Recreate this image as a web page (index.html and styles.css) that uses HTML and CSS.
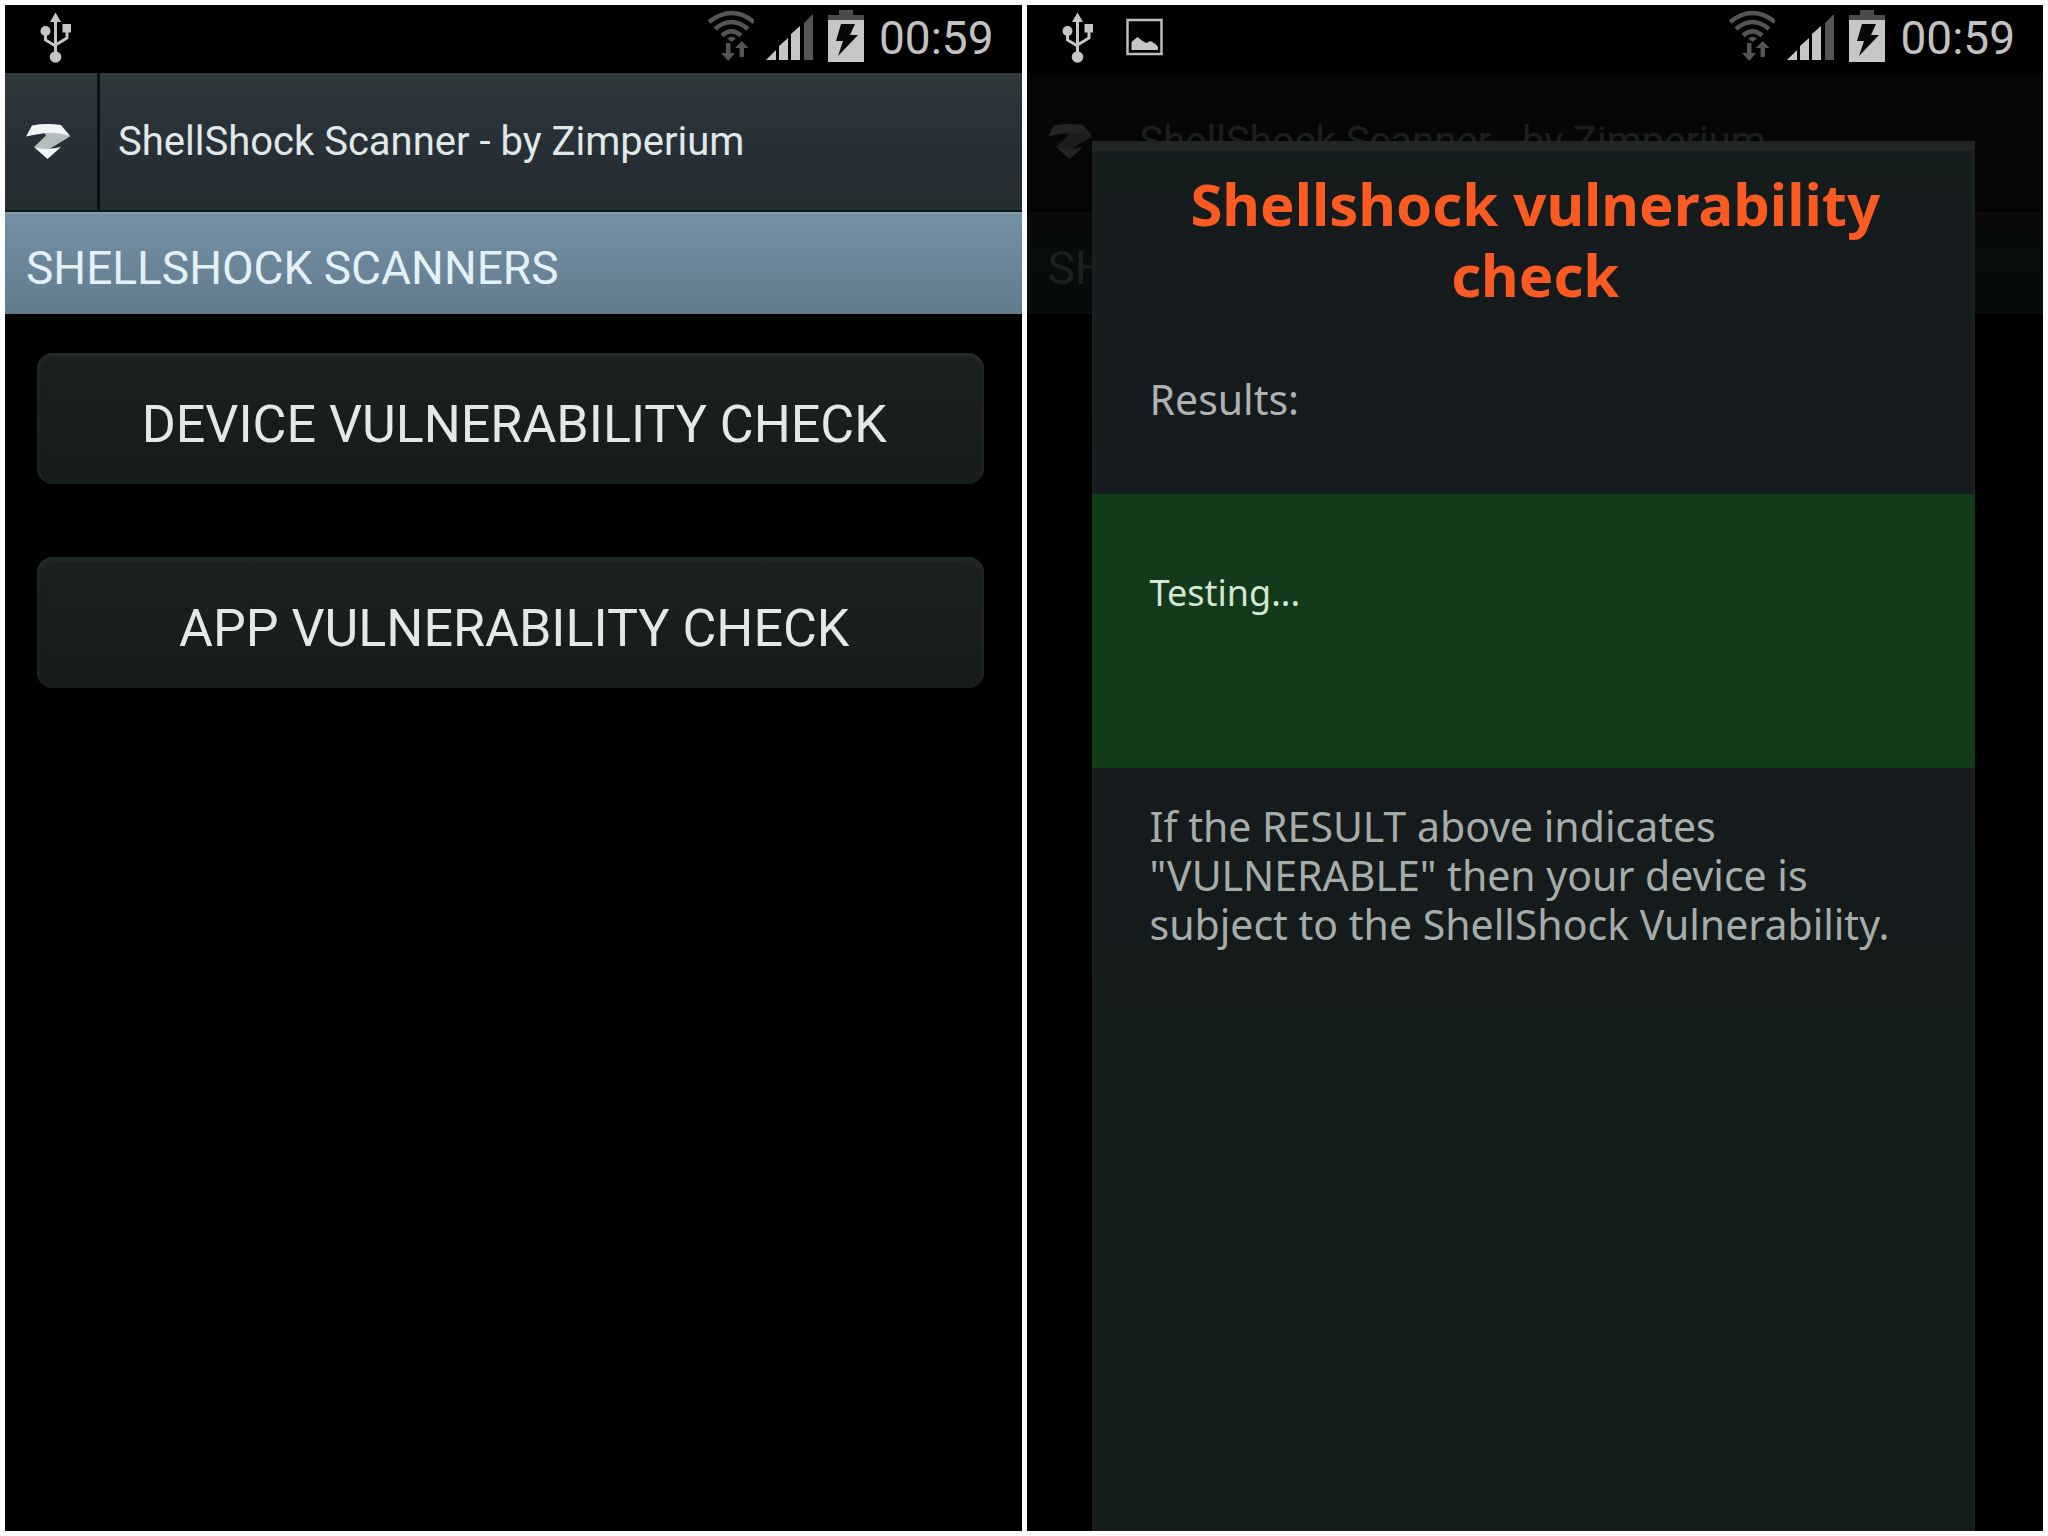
FILE: index.html
```html
<!DOCTYPE html>
<html lang="en">
<head>
<meta charset="utf-8">
<title>ShellShock Scanner</title>
<link rel="stylesheet" href="styles.css">
</head>
<body>
<svg width="0" height="0" class="defs" aria-hidden="true">
  <symbol id="usb" viewBox="38 5 36 68">
    <g fill="none" stroke="#c6c6c6" stroke-width="3"><path d="M55.500 20V55M45.500 33V40L55.500 46M67 30V38L55.500 45"/></g>
    <g fill="#c6c6c6"><path d="M55.500 12.500L61 22H50Z"/><circle cx="45.500" cy="31" r="5"/><rect x="62.500" y="24" width="8.500" height="8.500"/><circle cx="55.500" cy="57" r="5.800"/></g>
  </symbol>
  <symbol id="picture" viewBox="106 5 38 68">
    <rect x="108.500" y="20" width="34" height="34" fill="none" stroke="#bdbdbd" stroke-width="2.500"/>
    <path d="M112.500 50V42L118.500 37L123.500 41L127.500 43L131.500 41L136.500 44L139 47V50Z" fill="#c6c6c6"/>
  </symbol>
  <symbol id="wifi" viewBox="707 5 48 68">
    <g fill="none" stroke="#555" stroke-width="4.500"><path d="M710 22Q732.500 4 755 22M716 29Q732.500 15 749 29M723 35.500Q732.500 27 742 35.500"/></g>
    <g fill="#555"><path d="M728 38.500Q732.500 35 737 38.500L732.500 42Z"/><path d="M727 43H731.500V53H736L729.300 61L722 53H727Z"/><path d="M740.500 57H745V48H749.500L742.800 41L736 48H740.500Z"/></g>
  </symbol>
  <symbol id="signal" viewBox="766 5 50 68">
    <g fill="#c6c6c6"><path d="M766 60L776 50V60Z"/><path d="M779 60V46L788 38V60Z"/><path d="M791 60V34L800 26V60Z"/></g>
    <path d="M804 60V23L813 14V60Z" fill="#555"/>
  </symbol>
  <symbol id="battery" viewBox="828 5 36 68">
    <path d="M839 10H853V15H864V20H828V15H839Z" fill="#4b4b4b"/>
    <rect x="828" y="20" width="36" height="42" fill="#c6c6c6"/>
    <path d="M841 24H855L850 35H858L838 56L843 41H836Z" fill="#080808"/>
  </symbol>
  <symbol id="logo" viewBox="26 124 44 37">
    <path d="M44 133H67L70 137.500L51 149L46 152L34 148L46 136.500Z" fill="#b4bdbd"/>
    <path d="M32 126.500Q46 124 61 126L70 137Q56 133 46 134Q36 135 26 137.500ZM34 148Q40 150 47 150Q54 149.500 61 148L47.500 160Z" fill="#f0f6f6"/>
  </symbol>
</svg>

<main class="screens">
  <section class="screen" aria-label="Scanner menu">
    <div class="status">
      <svg class="ic-usb"><use href="#usb"/></svg>
      <div class="status-right">
        <svg class="ic-wifi"><use href="#wifi"/></svg>
        <svg class="ic-signal"><use href="#signal"/></svg>
        <svg class="ic-battery"><use href="#battery"/></svg>
        <time class="clock">00:59</time>
      </div>
    </div>
    <div class="app">
      <header class="appbar">
        <div class="logo"><svg><use href="#logo"/></svg></div>
        <h1 class="appname">ShellShock Scanner - by Zimperium</h1>
      </header>
      <h2 class="section">SHELLSHOCK SCANNERS</h2>
      <div class="actions">
        <button class="action" type="button">DEVICE VULNERABILITY CHECK</button>
        <button class="action" type="button">APP VULNERABILITY CHECK</button>
      </div>
    </div>
  </section>

  <section class="screen" aria-label="Vulnerability check">
    <div class="status">
      <svg class="ic-usb"><use href="#usb"/></svg>
      <svg class="ic-picture"><use href="#picture"/></svg>
      <div class="status-right">
        <svg class="ic-wifi"><use href="#wifi"/></svg>
        <svg class="ic-signal"><use href="#signal"/></svg>
        <svg class="ic-battery"><use href="#battery"/></svg>
        <time class="clock">00:59</time>
      </div>
    </div>
    <div class="app dimmed">
      <header class="appbar">
        <div class="logo"><svg><use href="#logo"/></svg></div>
        <p class="appname">ShellShock Scanner - by Zimperium</p>
      </header>
      <p class="section">SH</p>
    </div>
    <div class="dialog" role="dialog" aria-labelledby="dialog-title">
      <h2 class="dialog-title" id="dialog-title">Shellshock vulnerability check</h2>
      <p class="results">Results:</p>
      <p class="result">Testing...</p>
      <p class="note">If the RESULT above indicates "VULNERABLE" then your device is subject to the ShellShock Vulnerability.</p>
    </div>
  </section>
</main>
</body>
</html>
```
FILE: styles.css
```css
* { box-sizing: border-box; }

body {
  margin: 0;
  background: #fdfdfd;
  font-family: Roboto, "Liberation Sans", sans-serif;
}

h1, h2, p { margin: 0; font-weight: 400; }
svg { display: block; }
.defs { position: absolute; }

.screens {
  display: grid;
  grid-template-columns: 1fr 1fr;
  gap: 5px;
  min-height: 100vh;
  padding: 5px;
}

.screen {
  position: relative;
  background: #000;
  overflow: hidden;
}

/* status bar */
.status {
  display: flex;
  align-items: center;
  gap: 29px;
  height: 68px;
  padding: 0 28px 0 33px;
}
.status svg { height: 68px; flex: none; }
.ic-usb { width: 36px; }
.ic-picture { width: 38px; }
.ic-wifi { width: 48px; }
.ic-signal { width: 50px; }
.ic-battery { width: 36px; }
.status-right {
  display: flex;
  align-items: center;
  gap: 12px;
  margin-left: auto;
}
.clock {
  padding: 0 0 3px 3px;
  font-size: 46px;
  line-height: 56px;
  color: #c2c2c2;
}

/* title bar */
.appbar {
  display: flex;
  height: 139px;
  border-bottom: 2px solid #0c1517;
  background: linear-gradient(#2e3938, #2c343b 20%, #262e35 75%, #252e2e);
}
.logo {
  display: grid;
  place-items: center start;
  width: 95px;
  padding-left: 21px;
  border-right: 3px solid #0a1218;
}
.logo svg { width: 44px; height: 37px; }
.appname {
  padding-left: 18px;
  font-size: 40px;
  line-height: 138px;
  color: #e0e9ea;
  white-space: nowrap;
}
.section {
  height: 102px;
  padding: 9px 21px 0;
  border-top: 2px solid #839cab;
  background: linear-gradient(#7390a6, #6c8598 50%, #617b8c);
  font-size: 46px;
  line-height: 90px;
  color: #e3f1f5;
}

/* menu */
.actions {
  display: grid;
  gap: 73px;
  padding: 39px 38px 39px 32px;
}
.action {
  height: 131px;
  padding: 12px 0 0 8px;
  border: 0;
  border-radius: 16px;
  background: linear-gradient(#1b2220, #161b1b);
  box-shadow: inset 0 4px 4px #242c2a, inset 2px 0 3px #202624, inset -2px 0 3px #202624;
  font: 400 52px/64px Roboto, "Liberation Sans", sans-serif;
  color: #e4e8e7;
}

/* screen behind the dialog */
.dimmed .appbar { background: #060606; border-color: #040404; }
.dimmed .logo { border-color: #060606; }
.dimmed .logo svg { opacity: 0.12; }
.dimmed .appname { color: #1e1e1e; }
.dimmed .section {
  border-color: #0b0b0a;
  background: linear-gradient(#0c0a09, #060d0b 40%, #050c0b);
  color: #1c2120;
}

/* dialog */
.dialog {
  position: absolute;
  inset: 136px 68px 0 65px;
  border-top: 10px solid #212625;
  background: linear-gradient(#151c1c, #161a1e 25%, #151b1c 40%, #141c1b);
  box-shadow: inset 4px 0 3px #1b2020, inset -4px 0 3px #1b2020;
  font-family: "Noto Sans", "Open Sans", sans-serif;
}
.dialog-title {
  padding: 17px 58px 0 62px;
  font-size: 58px;
  font-weight: 700;
  line-height: 71px;
  text-align: center;
  color: #fb5a23;
}
.results {
  padding: 65px 58px 70px;
  font-size: 41px;
  line-height: 49px;
  color: #aeb2b3;
}
.result {
  padding: 74px 58px 151px;
  background: #123a1b;
  box-shadow: inset 0 0 12px #0f4215;
  font-size: 36px;
  line-height: 49px;
  color: #d5e6d3;
}
.note {
  padding: 34px 58px;
  font-size: 41px;
  line-height: 49px;
  color: #a5adab;
}
```
